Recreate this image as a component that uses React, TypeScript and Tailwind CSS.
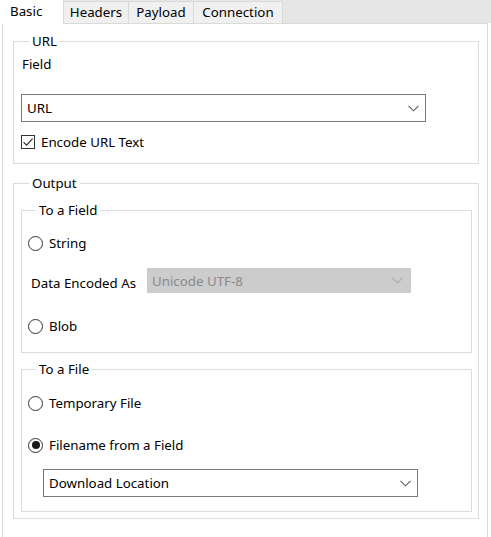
import React from 'react'

const font = { fontFamily: '"Noto Sans", "Open Sans", sans-serif' }

function Chevron({ color = '#5f5f5f' }: { color?: string }) {
  return (
    <svg width="11" height="7" viewBox="0 0 11 7" fill="none">
      <path d="M0.5 0.8 L5.5 5.8 L10.5 0.8" stroke={color} strokeWidth="1.1" />
    </svg>
  )
}

function Dropdown({ value, className }: { value: string; className: string }) {
  return (
    <div className={`flex h-[28px] items-center justify-between border border-[#7a7a7a] bg-white pl-[5px] pr-[6px] ${className}`}>
      <span className="text-[13.3px] leading-[16px] text-black">{value}</span>
      <Chevron />
    </div>
  )
}

function Radio({ label, checked, className = '' }: { label: string; checked?: boolean; className?: string }) {
  return (
    <div className={`flex h-[16px] items-center gap-[6px] ${className}`}>
      <span className="flex h-[15px] w-[15px] items-center justify-center rounded-full border border-[#333333] bg-white">
        {checked && <span className="h-[8px] w-[8px] rounded-full bg-[#1a1a1a]" />}
      </span>
      <span className="text-[13.3px] leading-[16px] text-black">{label}</span>
    </div>
  )
}

function Group({ title, className = '', children }: { title: string; className?: string; children: React.ReactNode }) {
  return (
    <fieldset className={`border border-[#dcdcdc] ${className}`}>
      <legend className="ml-[8px] px-[3px] text-[13.3px] leading-[16px] text-black">{title}</legend>
      {children}
    </fieldset>
  )
}

export default function App() {
  const tabs = ['Headers', 'Payload', 'Connection']
  const widths = ['w-[66px]', 'w-[65px]', 'w-[89px]']

  return (
    <div className="relative h-[537px] w-[491px] overflow-hidden bg-white" style={font}>
      {/* tab strip */}
      <div className="flex h-[23px] bg-[#e6e6e6]">
        <div className="relative z-10 h-[24px] w-[63px] bg-white pl-[10px] pt-[3px] text-[13.3px] leading-[16px] text-black">
          Basic
        </div>
        {tabs.map((t, i) => (
          <div
            key={t}
            className={`mt-[1px] h-[22px] border border-b-0 border-[#d9d9d9] bg-[#f0f0f0] pt-[2px] text-center text-[13.3px] leading-[16px] text-black ${i > 0 ? 'border-l-0' : ''} ${widths[i]}`}
          >
            {t}
          </div>
        ))}
      </div>

      {/* page */}
      <div className="ml-[2px] h-[520px] w-[486px] border border-[#dadada] bg-white pl-[10px] pr-[8px] pt-[9px]">
        <Group title="URL" className="px-[7px] pb-[13px]">
          <div className="pl-[1px] pt-[7px] text-[13.3px] leading-[16px] text-black">Field</div>
          <Dropdown value="URL" className="mt-[22px] w-[405px]" />
          <div className="mt-[12px] flex h-[16px] items-center gap-[6px]">
            <span className="flex h-[14px] w-[14px] items-center justify-center border border-[#333333] bg-white">
              <svg width="12" height="12" viewBox="0 0 12 12" fill="none">
                <path d="M1.5 6.2 L4.6 9.2 L10.6 2.6" stroke="#222" strokeWidth="1.1" />
              </svg>
            </span>
            <span className="text-[13.3px] leading-[16px] text-black">Encode URL Text</span>
          </div>
        </Group>

        <Group title="Output" className="mt-[11px] pb-[6px] pl-[7px] pr-[6px]">
          <Group title="To a Field" className="mt-[11px] pb-[18px] pl-[6px]">
            <Radio label="String" className="mt-[17px]" />
            <div className="mt-[17px] flex items-center">
              <span className="mt-[5px] w-[119px] pl-[3px] text-[13.3px] leading-[16px] text-black">Data Encoded As</span>
              <div className="flex h-[25px] w-[264px] items-center justify-between bg-[#cccccc] pl-[5px] pr-[8px]">
                <span className="text-[13.3px] leading-[16px] text-[#8a8a8a]">Unicode UTF-8</span>
                <Chevron color="#a8a8a8" />
              </div>
            </div>
            <Radio label="Blob" className="mt-[25px]" />
          </Group>

          <Group title="To a File" className="mt-[8px] pb-[14px] pl-[6px]">
            <Radio label="Temporary File" className="mt-[18px]" />
            <Radio label="Filename from a Field" checked className="mt-[26px]" />
            <Dropdown value="Download Location" className="ml-[15px] mt-[16px] w-[375px]" />
          </Group>
        </Group>
      </div>
    </div>
  )
}
